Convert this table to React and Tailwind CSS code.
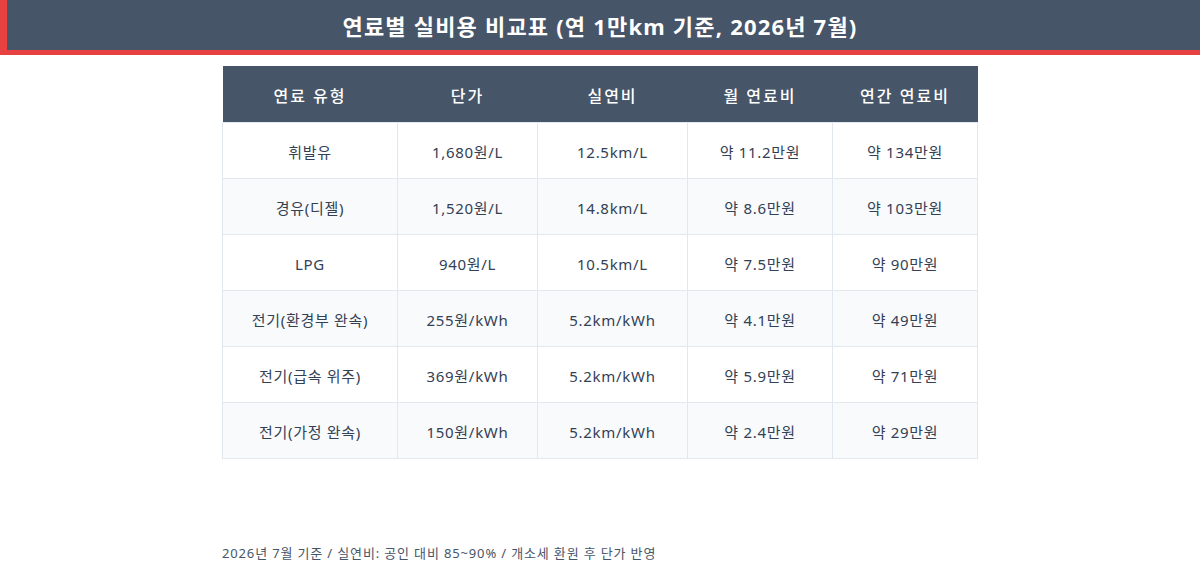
import React from 'react'

const ROWS = [
  ['휘발유', '1,680원/L', '12.5km/L', '약 11.2만원', '약 134만원'],
  ['경유(디젤)', '1,520원/L', '14.8km/L', '약 8.6만원', '약 103만원'],
  ['LPG', '940원/L', '10.5km/L', '약 7.5만원', '약 90만원'],
  ['전기(환경부 완속)', '255원/kWh', '5.2km/kWh', '약 4.1만원', '약 49만원'],
  ['전기(급속 위주)', '369원/kWh', '5.2km/kWh', '약 5.9만원', '약 71만원'],
  ['전기(가정 완속)', '150원/kWh', '5.2km/kWh', '약 2.4만원', '약 29만원'],
]

const HEADS = ['연료 유형', '단가', '실연비', '월 연료비', '연간 연료비']
const WIDTHS = ['w-[175px]', 'w-[140px]', 'w-[150px]', 'w-[145px]', 'w-[145px]']

export default function App() {
  return (
    <div
      className="w-[1200px] h-[570px] bg-white flex flex-col"
      style={{ fontFamily: '"Noto Sans", "Noto Sans CJK KR", sans-serif' }}
    >
      {/* 제목 */}
      <div className="h-[55px] bg-[#475569] border-l-[7px] border-b-[5px] border-[#e84142] flex items-center justify-center">
        <h1 className="text-white text-[22px] font-bold leading-none tracking-[1.2px] pr-[7px] pt-[2px]">
          연료별 실비용 비교표 (연 1만km 기준, 2026년 7월)
        </h1>
      </div>

      {/* 표 */}
      <div className="pt-[11px] pl-[222px]">
        <table className="border-collapse table-fixed w-[756px] text-[15px] tracking-[0.7px] text-[#334155]">
          <thead>
            <tr className="bg-[#475569] h-[56px]">
              {HEADS.map((h, i) => (
                <th key={h} className={`${WIDTHS[i]} text-white text-[16px] tracking-[2px] font-medium text-center pt-[5px]`}>
                  {h}
                </th>
              ))}
            </tr>
          </thead>
          <tbody>
            {ROWS.map((r, ri) => (
              <tr key={r[0]} className={`h-[56px] ${ri % 2 ? 'bg-[#f8fafc]' : 'bg-white'}`}>
                {r.map((c, ci) => (
                  <td key={ci} className="border border-[#e2e8f0] text-center pt-[4px]">
                    {c}
                  </td>
                ))}
              </tr>
            ))}
          </tbody>
        </table>
      </div>

      <div className="mt-auto mb-[7px] pl-[222px] text-[13px] tracking-[0.85px] text-[#475569]">
        2026년 7월 기준 / 실연비: 공인 대비 85~90% / 개소세 환원 후 단가 반영
      </div>
    </div>
  )
}
